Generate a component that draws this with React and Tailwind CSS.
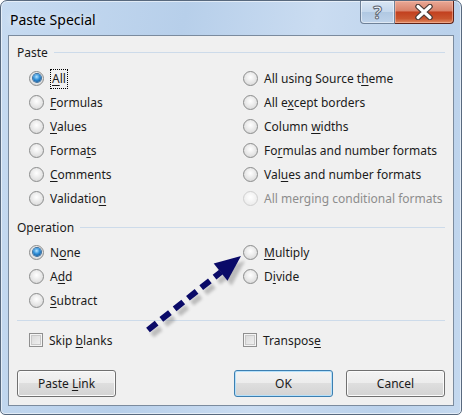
import React from 'react';

function Radio({ checked, disabled }) {
  return (
    <span
      className={`flex h-[15px] w-[15px] shrink-0 items-center justify-center rounded-full border ${
        disabled
          ? 'border-[#cfcfcf] bg-[radial-gradient(circle_at_50%_40%,#ffffff_0%,#f1f1f1_55%,#e6e6e6_100%)]'
          : 'border-[#8b8c8c] bg-[radial-gradient(circle_at_50%_40%,#ffffff_0%,#e4e4e4_60%,#cdcdcd_100%)]'
      }`}
    >
      {checked && (
        <span className="h-[8px] w-[8px] rounded-full bg-[radial-gradient(circle_at_45%_35%,#b6e4ff_0%,#2f8fd8_45%,#0b3f7a_100%)] shadow-[0_0_0_1px_#3b6f9e]" />
      )}
    </span>
  );
}

function Check() {
  return (
    <span className="h-[14px] w-[14px] shrink-0 border border-[#8f8f8f] bg-[linear-gradient(135deg,#d6d6d6,#f4f4f4)] shadow-[inset_0_0_0_1px_#f4f4f4,inset_0_0_0_2px_#c9c9c9]" />
  );
}

function Opt({ checked, disabled, check, children }) {
  return (
    <div className={`flex h-[24px] items-center gap-[6px] ${disabled ? 'text-[#8d8d8d]' : 'text-[#1b1b1b]'}`}>
      {check ? <Check /> : <Radio checked={checked} disabled={disabled} />}
      <span className="whitespace-nowrap pt-[2px]">{children}</span>
    </div>
  );
}

function U({ children }) {
  return <span className="underline underline-offset-[2px] decoration-1">{children}</span>;
}

function Heading({ children }) {
  return (
    <div className="flex h-[16px] items-center gap-[6px] px-[8px]">
      <span className="pt-[2px] text-[#1b1b1b]">{children}</span>
      <div className="h-px flex-1 bg-[#cddbea]" />
    </div>
  );
}

function Btn({ focused, children }) {
  return (
    <button
      className={`flex h-[27px] w-[99px] items-center justify-center rounded-[3px] border bg-[linear-gradient(#f3f3f3_0%,#ececec_50%,#dedede_50%,#d3d3d3_100%)] text-[#1b1b1b] ${
        focused
          ? 'border-[#3c7fb1] shadow-[inset_0_0_0_1px_#b5e0fa]'
          : 'border-[#707070] shadow-[inset_0_0_0_1px_#fbfbfb]'
      }`}
    >
      <span className="whitespace-pre pt-[1px]">{children}</span>
    </button>
  );
}

function Arrow() {
  return (
    <svg className="pointer-events-none absolute left-0 top-0" width="462" height="415">
      <defs>
        <filter id="blur" x="-20%" y="-20%" width="140%" height="140%">
          <feGaussianBlur stdDeviation="1.6" />
        </filter>
      </defs>
      <g transform="translate(4 5)" filter="url(#blur)" opacity="0.45">
        <line x1="148" y1="330" x2="221" y2="272" stroke="#7d7d7d" strokeWidth="6" strokeDasharray="11 6" />
        <polygon points="241,256 227.5,280.8 213.7,263.6" fill="#7d7d7d" />
      </g>
      <line x1="148" y1="330" x2="221" y2="272" stroke="#0a0a68" strokeWidth="6" strokeDasharray="11 6" />
      <polygon points="241,256 227.5,280.8 213.7,263.6" fill="#0a0a68" />
    </svg>
  );
}

export default function App() {
  return (
    <div className="relative h-[415px] w-[462px] font-['Noto_Sans',sans-serif] text-[12px] leading-none">
      <div className="flex h-full w-full flex-col rounded-t-[7px] rounded-b-[5px] border border-[#58697e] bg-[linear-gradient(100deg,#c7dbf1_0%,#b7cfea_35%,#cadcf1_60%,#bad1eb_85%,#c5d9ef_100%)] shadow-[inset_0_0_0_1px_rgba(255,255,255,0.55)]">
        {/* title bar */}
        <div className="flex h-[34px] shrink-0 items-start justify-between">
          <span className="pl-[9px] pt-[12px] text-[14px] text-black [text-shadow:0_0_6px_rgba(255,255,255,0.9)]">
            Paste Special
          </span>
          <div className="mr-[7px] flex">
            <div className="flex h-[23px] w-[35px] items-center justify-center rounded-bl-[4px] border border-t-0 border-[#6f8198] bg-[linear-gradient(#d9e6f4,#c4d7ec_50%,#b0c8e2_50%,#bfd3ea)] shadow-[inset_0_0_0_1px_rgba(255,255,255,0.5)]">
              <span className="text-[18px] font-bold text-[#f4f7fb] [-webkit-text-stroke:1px_#5d6672]">?</span>
            </div>
            <div className="flex h-[23px] w-[59px] items-center justify-center rounded-br-[4px] border border-l-0 border-t-0 border-[#5e2218] bg-[linear-gradient(#e9a896,#d9826a_45%,#c2401f_50%,#c9552e_80%,#e08a62)] shadow-[inset_0_0_0_1px_rgba(255,200,180,0.5)]">
              <svg width="20" height="16" viewBox="0 0 20 16">
                <path d="M4 2.5 L16 13.5 M16 2.5 L4 13.5" stroke="#4a3a36" strokeWidth="5.5" strokeLinecap="round" />
                <path d="M4 2.5 L16 13.5 M16 2.5 L4 13.5" stroke="#ffffff" strokeWidth="3.2" strokeLinecap="round" />
              </svg>
            </div>
          </div>
        </div>

        {/* client area */}
        <div className="mx-[7px] mb-[8px] flex flex-1 flex-col border border-[#7b8b9e] bg-[#f0f0f0] pt-[8px]">
          <Heading>Paste</Heading>
          <div className="mt-[6px] grid grid-cols-[214px_1fr] pl-[20px]">
            <div className="flex flex-col">
              <Opt checked>
                <span className="border border-dotted border-black px-[1px] pb-[1px]">
                  <U>A</U>ll
                </span>
              </Opt>
              <Opt><U>F</U>ormulas</Opt>
              <Opt><U>V</U>alues</Opt>
              <Opt>Forma<U>t</U>s</Opt>
              <Opt><U>C</U>omments</Opt>
              <Opt>Validatio<U>n</U></Opt>
            </div>
            <div className="flex flex-col">
              <Opt>All using Source t<U>h</U>eme</Opt>
              <Opt>All e<U>x</U>cept borders</Opt>
              <Opt>Column <U>w</U>idths</Opt>
              <Opt>Fo<U>r</U>mulas and number formats</Opt>
              <Opt>Val<U>u</U>es and number formats</Opt>
              <Opt disabled>All merging conditional formats</Opt>
            </div>
          </div>

          <div className="mt-[9px]">
            <Heading>Operation</Heading>
          </div>
          <div className="mt-[5px] grid grid-cols-[214px_1fr] pl-[20px]">
            <div className="flex flex-col">
              <Opt checked>N<U>o</U>ne</Opt>
              <Opt>A<U>d</U>d</Opt>
              <Opt><U>S</U>ubtract</Opt>
            </div>
            <div className="flex flex-col">
              <Opt><U>M</U>ultiply</Opt>
              <Opt>D<U>i</U>vide</Opt>
            </div>
          </div>

          <div className="mx-[8px] mt-[8px] h-px bg-[#cddbea]" />

          <div className="mt-[7px] grid grid-cols-[214px_1fr] pl-[20px]">
            <Opt check>Skip <U>b</U>lanks</Opt>
            <Opt check>Transpos<U>e</U></Opt>
          </div>

          <div className="mt-[18px] flex items-center px-[8px]">
            <Btn>Paste <U>L</U>ink</Btn>
            <div className="flex-1" />
            <Btn focused>OK</Btn>
            <div className="w-[13px]" />
            <Btn>Cancel</Btn>
          </div>
        </div>
      </div>
      <Arrow />
    </div>
  );
}
